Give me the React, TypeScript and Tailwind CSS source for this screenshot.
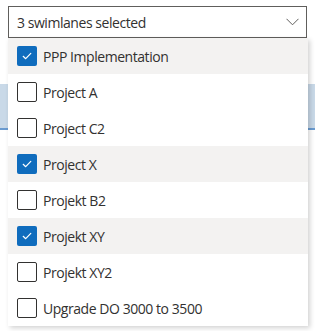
const options = [
  { name: "PPP Implementation", checked: true },
  { name: "Project A", checked: false },
  { name: "Project C2", checked: false },
  { name: "Project X", checked: true },
  { name: "Projekt B2", checked: false },
  { name: "Projekt XY", checked: true },
  { name: "Projekt XY2", checked: false },
  { name: "Upgrade DO 3000 to 3500", checked: false },
];

const Check = ({ on }: { on: boolean }) =>
  on ? (
    <span className="flex h-5 w-5 items-center justify-center rounded-[2px] bg-[#0f6cbd]">
      <svg width="12" height="12" viewBox="0 0 12 12" fill="none">
        <path d="M2.2 6.3l2.5 2.4 5.1-5.3" stroke="white" strokeWidth="1.2" strokeLinecap="round" strokeLinejoin="round" />
      </svg>
    </span>
  ) : (
    <span className="h-5 w-5 rounded-[2px] border border-[#323130] bg-white" />
  );

export default function App() {
  return (
    <div className="relative h-[331px] w-[315px] bg-white font-['Open_Sans',sans-serif] text-[14px] tracking-[-0.45px] text-[#323130]">
      <div className="absolute left-0 top-[84px] h-[46px] w-full border-b-2 border-[#6a9bd0] bg-[#c9d9e8]" />
      <div className="absolute left-[8px] top-[6px] w-[299px]">
        <div className="flex h-[32px] items-center justify-between border border-[#605e5c] bg-white pl-[8px] pr-[7px]">
          <span>3 swimlanes selected</span>
          <svg width="13" height="8" viewBox="0 0 13 8" fill="none">
            <path d="M0.5 0.8l6 6 6-6" stroke="#605e5c" strokeWidth="1" />
          </svg>
        </div>
        <div className="w-[300px] bg-white shadow-[2px_2px_5px_rgba(0,0,0,0.18)]">
          {options.map((o) => (
            <div
              key={o.name}
              className={`flex h-[36px] items-center gap-[6px] pl-[9px] ${o.checked ? "bg-[#f3f2f1]" : ""}`}
            >
              <Check on={o.checked} />
              <span>{o.name}</span>
            </div>
          ))}
        </div>
      </div>
    </div>
  );
}
